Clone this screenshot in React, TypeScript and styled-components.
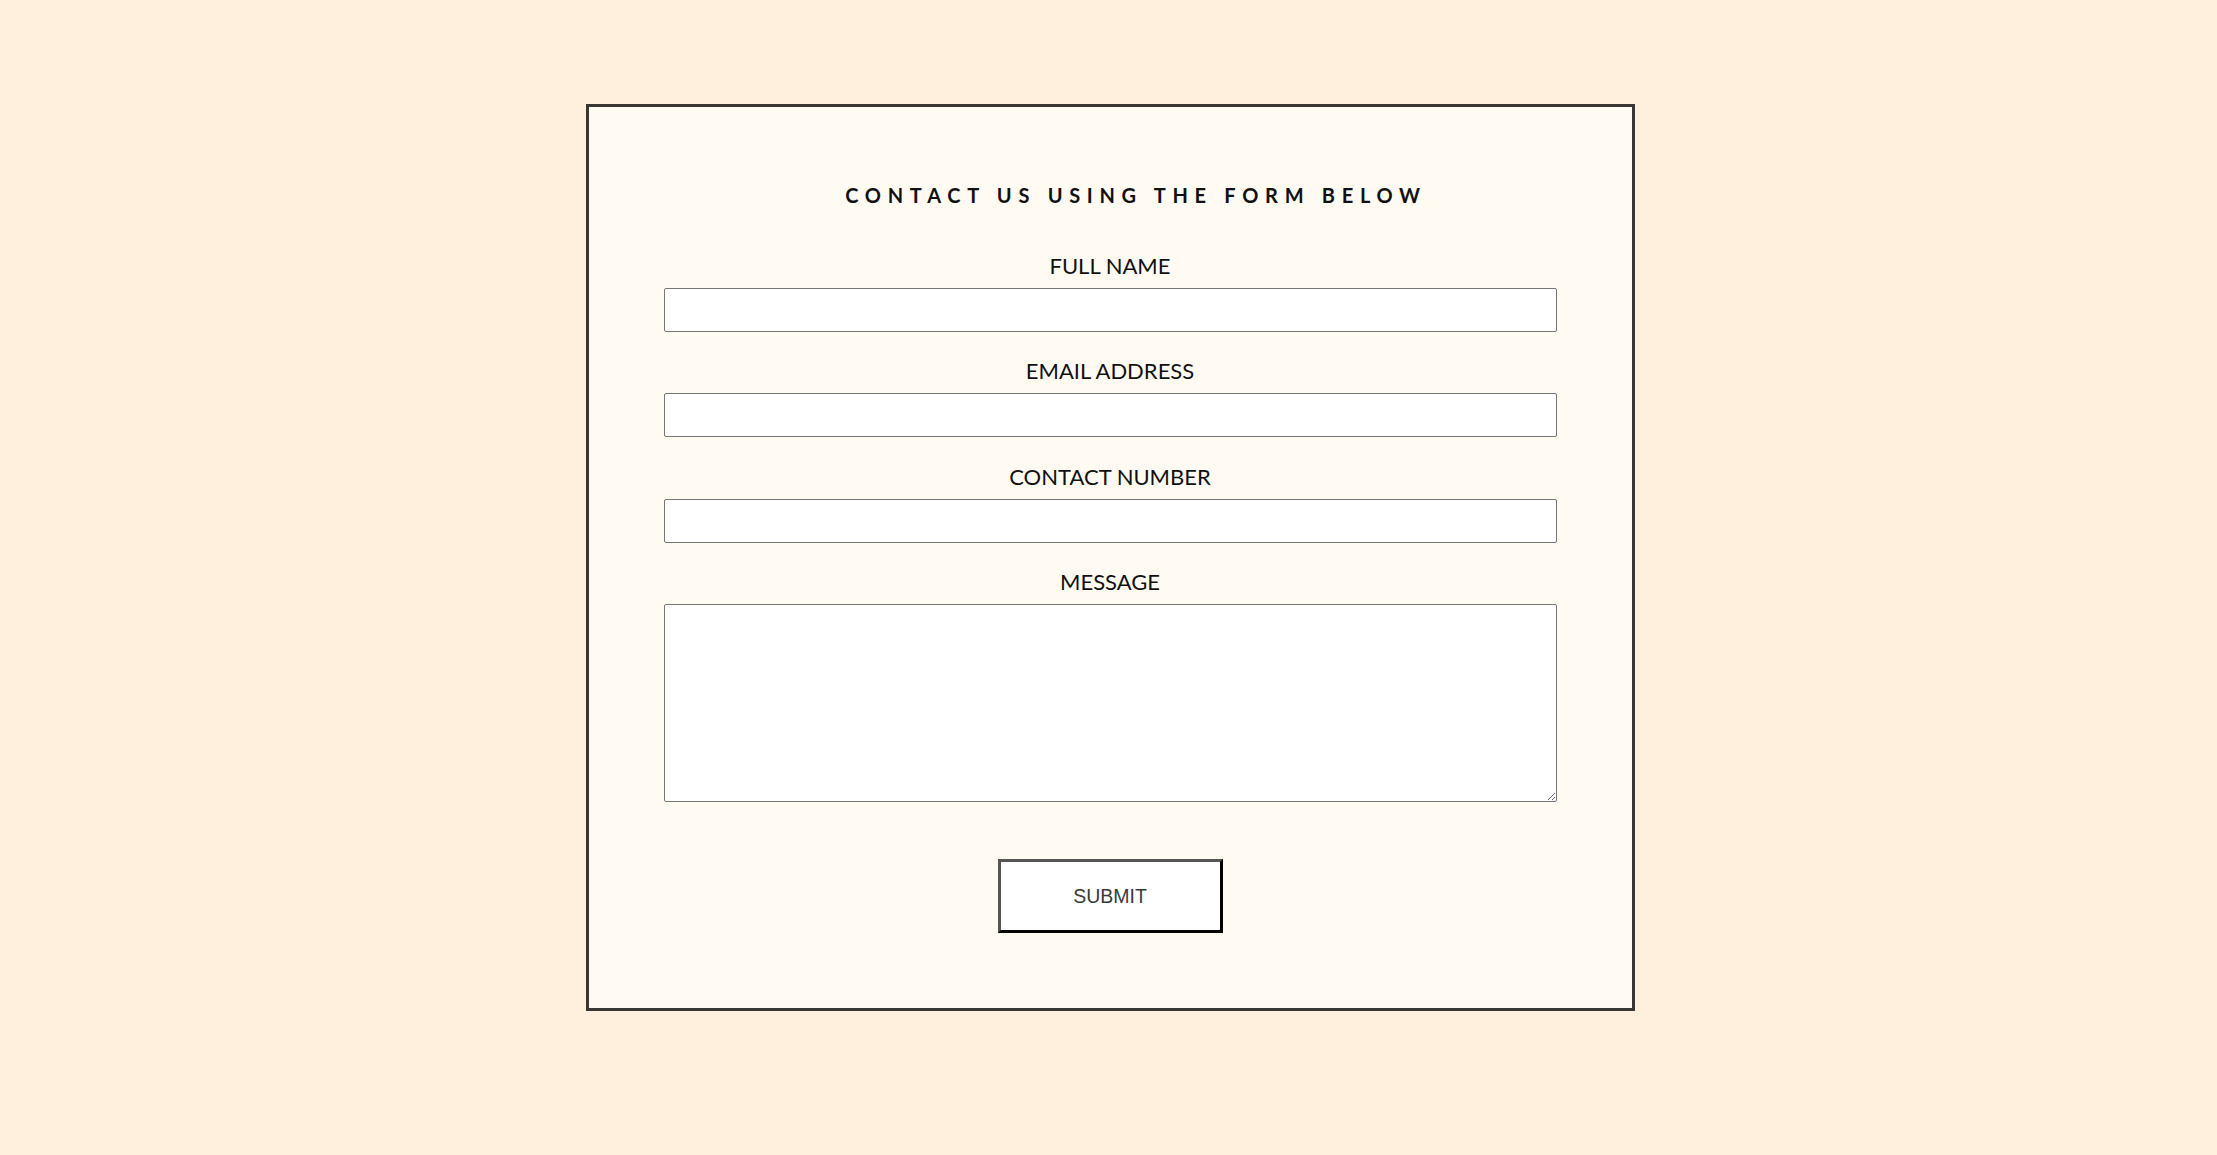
import React from "react";
import styled, { createGlobalStyle } from "styled-components";

const GlobalStyle = createGlobalStyle`
  html, body {
    margin: 0;
    padding: 0;
    background: #fff0de;
  }
  body {
    font-family: Lato, "Noto Sans", sans-serif;
  }
`;

const Page = styled.main`
  display: flex;
  justify-content: center;
  padding: 104px 0 144px 3px;
`;

const Card = styled.section`
  box-sizing: border-box;
  width: 1049px;
  background: #fffbf3;
  border: 3px solid #3a3636;
  padding: 76px 75px 75px;
  display: flex;
  flex-direction: column;
  align-items: stretch;
`;

const Title = styled.h2`
  margin: 0 0 46px;
  padding-left: 52px;
  text-align: center;
  font-family: Lato, sans-serif;
  font-weight: 700;
  font-size: 20px;
  line-height: 24px;
  letter-spacing: 6.7px;
  color: #111;
`;

const Form = styled.form`
  display: flex;
  flex-direction: column;
`;

const Field = styled.div<{ $last?: boolean }>`
  display: flex;
  flex-direction: column;
  align-items: stretch;
  margin-bottom: ${(p) => (p.$last ? "57px" : "26.4px")};
`;

const Label = styled.label`
  text-align: center;
  font-family: Lato, sans-serif;
  font-weight: 400;
  font-size: 22px;
  line-height: 26px;
  color: #111;
  margin-bottom: 9px;
`;

const Input = styled.input`
  box-sizing: border-box;
  height: 44px;
  width: 100%;
  border: 1px solid #767676;
  border-radius: 2px;
  background: #fff;
  font-size: 16px;
  padding: 0 8px;
  margin: 0;
`;

const TextArea = styled.textarea`
  box-sizing: border-box;
  height: 198px;
  width: 100%;
  border: 1px solid #767676;
  border-radius: 2px;
  background: #fff;
  font-size: 16px;
  padding: 8px;
  margin: 0;
  display: block;
`;

const ButtonRow = styled.div`
  display: flex;
  justify-content: center;
`;

const SubmitButton = styled.button`
  box-sizing: border-box;
  width: 225px;
  height: 74px;
  background: #fff;
  border-style: solid;
  border-width: 3px;
  border-color: #555 #000 #000 #555;
  font-family: "Liberation Sans", Arial, sans-serif;
  font-size: 19.5px;
  color: #3a3a3a;
  cursor: pointer;
`;

export default function App() {
  return (
    <>
      <GlobalStyle />
      <Page>
        <Card>
          <Title>CONTACT US USING THE FORM BELOW</Title>
          <Form onSubmit={(e) => e.preventDefault()}>
            <Field>
              <Label htmlFor="name">FULL NAME</Label>
              <Input id="name" type="text" />
            </Field>
            <Field>
              <Label htmlFor="email">EMAIL ADDRESS</Label>
              <Input id="email" type="email" />
            </Field>
            <Field>
              <Label htmlFor="phone">CONTACT NUMBER</Label>
              <Input id="phone" type="tel" />
            </Field>
            <Field $last>
              <Label htmlFor="message">MESSAGE</Label>
              <TextArea id="message" />
            </Field>
            <ButtonRow>
              <SubmitButton type="submit">SUBMIT</SubmitButton>
            </ButtonRow>
          </Form>
        </Card>
      </Page>
    </>
  );
}
